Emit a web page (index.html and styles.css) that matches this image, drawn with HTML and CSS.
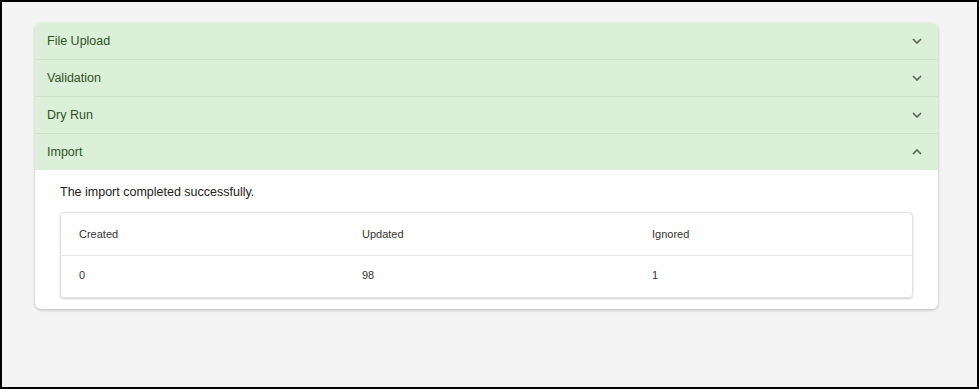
FILE: index.html
```html
<!DOCTYPE html>
<html lang="en">
<head>
    <meta charset="UTF-8">
    <meta name="viewport" content="width=device-width, initial-scale=1.0">
    <title>Import</title>
    <link rel="stylesheet" href="styles.css">
</head>
<body>
    <div class="frame">
        <div class="card">
            <div class="step">
                <span>File Upload</span>
                <svg class="chevron" viewBox="0 0 10 6"><path d="M1 1l4 4 4-4"/></svg>
            </div>
            <div class="step">
                <span>Validation</span>
                <svg class="chevron" viewBox="0 0 10 6"><path d="M1 1l4 4 4-4"/></svg>
            </div>
            <div class="step">
                <span>Dry Run</span>
                <svg class="chevron" viewBox="0 0 10 6"><path d="M1 1l4 4 4-4"/></svg>
            </div>
            <div class="step open">
                <span>Import</span>
                <svg class="chevron" viewBox="0 0 10 6"><path d="M1 5l4-4 4 4"/></svg>
            </div>
            <div class="step-body">
                <p class="message">The import completed successfully.</p>
                <div class="summary">
                    <div class="row head">
                        <div>Created</div>
                        <div>Updated</div>
                        <div>Ignored</div>
                    </div>
                    <div class="row">
                        <div>0</div>
                        <div>98</div>
                        <div>1</div>
                    </div>
                </div>
            </div>
        </div>
    </div>
</body>
</html>
```

FILE: styles.css
```css
* { margin: 0; padding: 0; box-sizing: border-box; }
body { font-family: "Liberation Sans", Arial, sans-serif; background: #f4f4f4; color: #222; }
.frame { width: 979px; height: 389px; border: 2px solid #000; background: #f4f4f4; padding: 21px 39px 0 33px; }
.card { background: #fff; border-radius: 6px; box-shadow: 0 1px 3px rgba(0, 0, 0, 0.25); overflow: hidden; }
.step { display: flex; align-items: center; justify-content: space-between; height: 37px; padding: 0 16px 0 12px; background: #dcefd8; color: #2f5226; font-size: 12.5px; border-top: 1px solid #cfe3ca; }
.step:first-child { border-top: none; height: 36px; }
.chevron { width: 10px; height: 6px; fill: none; stroke: #5a5f58; stroke-width: 1.6; }
.step-body { padding: 12px 25px 11px; }
.message { font-size: 12.5px; line-height: 20px; margin-bottom: 10px; }
.summary { border: 1px solid #e2e2e2; border-radius: 4px; box-shadow: 0 1px 2px rgba(0, 0, 0, 0.2); font-size: 11px; color: #333; }
.row { display: grid; grid-template-columns: 283px 290px 1fr; padding: 0 0 3px 18px; height: 41px; align-items: center; }
.row.head { height: 43px; padding-bottom: 1px; border-bottom: 1px solid #e6e6e6; }
```
